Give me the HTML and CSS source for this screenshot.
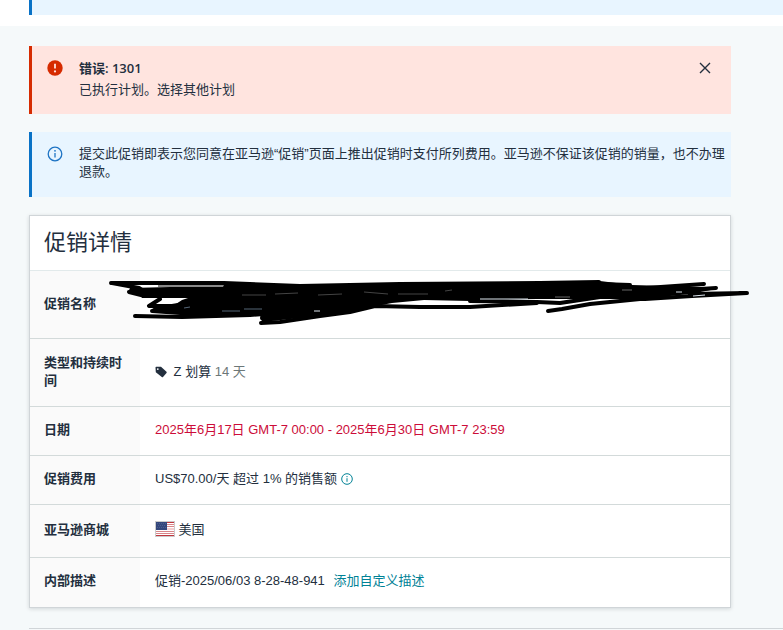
FILE: index.html
```html
<!DOCTYPE html>
<html lang="zh-CN">

<head>
    <meta charset="UTF-8">
    <meta name="viewport" content="width=device-width, initial-scale=1.0">
    <title>促销详情</title>
    <link rel="stylesheet" href="styles.css">
</head>

<body>
    <header class="top">
        <div class="top-notice"></div>
    </header>

    <main>
        <div class="content">
            <div class="alert alert-error" role="alert">
                <svg class="alert-icon" viewBox="0 0 16 16" aria-hidden="true">
                    <circle cx="8" cy="8" r="7.7" fill="#d62b00" />
                    <path d="M8 3.8v4.8" stroke="#ffe3de" stroke-width="1.8" />
                    <circle cx="8" cy="11.4" r="1.1" fill="#ffe3de" />
                </svg>
                <div class="alert-text">
                    <h2>错误: 1301</h2>
                    <p>已执行计划。选择其他计划</p>
                </div>
                <button class="close" type="button" aria-label="关闭">
                    <svg viewBox="0 0 12 12" aria-hidden="true">
                        <path d="M1 1l10 10M11 1L1 11" />
                    </svg>
                </button>
            </div>

            <div class="alert alert-info">
                <svg class="alert-icon" viewBox="0 0 16 16" aria-hidden="true">
                    <circle cx="8" cy="8" r="6.8" fill="none" stroke="#1f74c4" stroke-width="1.3" />
                    <path d="M8 7v4.6" stroke="#1f74c4" stroke-width="1.3" />
                    <circle cx="8" cy="4.8" r="0.9" fill="#1f74c4" />
                </svg>
                <div class="alert-text">
                    <p>提交此促销即表示您同意在亚马逊“促销”页面上推出促销时支付所列费用。亚马逊不保证该促销的销量，也不办理退款。</p>
                </div>
            </div>

            <section class="panel">
                <h1>促销详情</h1>
                <table>
                    <tr class="row-tall">
                        <th scope="row">促销名称</th>
                        <td class="redacted">
                            <svg class="scribble" viewBox="108 276 642 52" aria-hidden="true">
                                <path class="ink" d="M130 288L170 287 223 287 224 283 250 285 320 286 400 284 530 283 600 281 632 285 702 287 716 289 690 294 640 299 600 299 530 299 470 301 424 300 392 303 366 308 350 312 325 316 300 318 262 322 260 315 240 316 184 317 180 315 152 313 152 309 160 304 176 304 182 300 188 298 142 298 140 294 128 293z" />
                                <path class="stroke" d="M111 283L148 283 224 283 300 286 400 284 540 283 599 282" />
                                <path class="stroke" d="M112 283L139 288 142 290 129 292 145 296 220 292 340 290" />
                                <path class="stroke" d="M160 299L149 306 172 306 190 303 M152 311L185 311 270 307" />
                                <path class="stroke" d="M135 316L182 317 250 315 340 308" />
                                <path class="stroke" d="M262 318L277 317 M261 323L280 322 320 316 350 312 375 306 420 307 470 307 537 303" />
                                <path class="stroke" d="M470 301L537 302 560 303 600 297" />
                                <path class="stroke" d="M548 311L562 309 590 304 640 299 M600 284L630 285" />
                                <path class="stroke" d="M632 289L675 286 704 284 M640 293L716 288" />
                                <path class="stroke" d="M632 299L645 299 692 296 747 293 690 294" />
                                <path class="gap" d="M158 286H223" stroke="#888" stroke-width="2" />
                                <path class="gap" d="M242 295H266M275 294L298 293M318 295L342 294M364 292L388 294M398 294H428M445 291L452 290" stroke="#444" />
                                <path class="gap" d="M222 311L240 311M244 309H262M184 308L190 307" stroke="#567" />
                                <path class="gap" d="M314 311H320M480 299H528M693 296L705 295M676 292L682 292" stroke="#dde6ef" />
                                <path class="gap" d="M622 290H632M555 297H570" stroke="#666" />
                            </svg>
                        </td>
                    </tr>
                    <tr class="row-tall">
                        <th scope="row">类型和持续时间</th>
                        <td>
                            <svg class="tag" viewBox="0 0 12 12" aria-hidden="true">
                                <path fill-rule="evenodd" d="M.5 1.5Q.5 .8 1.2.8L6 .8 11.5 5.8Q12 6.3 11.5 6.9L8 11Q7.4 11.5 6.8 11L.8 6.3zM2.8 2.2a.9.9 0 100 1.8.9.9 0 100-1.8z" />
                            </svg>
                            Z 划算 <span class="muted">14 天</span>
                        </td>
                    </tr>
                    <tr>
                        <th scope="row">日期</th>
                        <td class="dates">2025年6月17日 GMT-7 00:00 - 2025年6月30日 GMT-7 23:59</td>
                    </tr>
                    <tr>
                        <th scope="row">促销费用</th>
                        <td>
                            US$70.00/天 超过 1% 的销售额
                            <svg class="info" viewBox="0 0 12 12" aria-hidden="true">
                                <circle cx="6" cy="6" r="5.3" />
                                <path d="M6 5.2v3.6M6 3v1.2" />
                            </svg>
                        </td>
                    </tr>
                    <tr class="row-flag">
                        <th scope="row">亚马逊商城</th>
                        <td>
                            <svg class="flag" viewBox="0 0 20 16" aria-hidden="true">
                                <rect width="20" height="16" fill="#ccc" />
                                <rect x="1" y="1" width="18" height="14" fill="#fff" />
                                <path d="M1 1.5h18M1 14.5h18" stroke="#c1373f" />
                                <path d="M1 3.5h18M1 5.5h18M1 10.5h18M1 12.5h18" stroke="#d9868a" />
                                <path d="M1 8h18" stroke="#f3cfd0" stroke-width="2" />
                                <rect x="1" y="1" width="11" height="8" fill="#34477c" />
                                <path d="M2 2.5h9M3 4.5h8M2 6.5h9" stroke="#4c5d8d" stroke-dasharray="1 1" />
                            </svg>
                            美国
                        </td>
                    </tr>
                    <tr>
                        <th scope="row">内部描述</th>
                        <td>促销-2025/06/03 8-28-48-941 <a href="#">添加自定义描述</a></td>
                    </tr>
                </table>
            </section>
        </div>

        <section class="next-panel"></section>
    </main>
</body>

</html>
```

FILE: styles.css
```css
* {
    box-sizing: border-box;
}

body {
    margin: 0;
    background: #f5f9fa;
    font-family: "Liberation Sans", "Noto Sans CJK SC", sans-serif;
    font-size: 13px;
    line-height: 18px;
    color: #232f3e;
}

h1,
h2,
p {
    margin: 0;
}

.top {
    background: #fff;
    padding: 0 0 11px 29px;
}

.top-notice {
    height: 15px;
    background: #e8f5ff;
    border-left: 3px solid #0972c6;
}

main {
    padding: 20px 0 0 29px;
}

.content {
    margin-right: 52px;
}

.alert {
    display: flex;
    align-items: flex-start;
    gap: 16px;
    margin-bottom: 18px;
    padding: 13px 5px 15px 15px;
    border-left: 3px solid;
}

.alert-error {
    padding-right: 20px;
    background: #ffe4df;
    border-color: #d62b00;
}

.alert-info {
    padding-bottom: 16px;
    background: #e8f5ff;
    border-color: #0972c6;
}

.alert-icon {
    flex: none;
    width: 16px;
    height: 16px;
    margin-top: 1px;
}

.alert-text {
    flex: 1;
}

.alert h2 {
    margin-bottom: 4px;
    font-family: "Open Sans", "Noto Sans CJK SC", sans-serif;
    font-size: 13px;
    font-weight: 600;
    line-height: 18px;
}

.close {
    padding: 3px 0;
    background: none;
    border: none;
    cursor: pointer;
}

.close svg {
    display: block;
    width: 12px;
    height: 12px;
    fill: none;
    stroke: #232f3e;
    stroke-width: 1.4;
}

.panel {
    background: #fff;
    border: 1px solid #d0d5d8;
    box-shadow: 0 1px 4px rgba(0, 20, 30, 0.15);
}

.panel h1 {
    padding: 12px 14px;
    font-size: 22px;
    font-weight: normal;
    line-height: 30px;
}

table {
    width: 100%;
    border-collapse: collapse;
}

tr {
    height: 49px;
    border-top: 1px solid #d3dada;
}

tr:first-child {
    border-top-color: #e2eaeb;
}

.row-tall {
    height: 68px;
}

.row-flag {
    height: 53px;
}

th,
td {
    padding: 13px 15px 15px;
    text-align: left;
    vertical-align: middle;
}

th {
    width: 110px;
    padding-left: 14px;
    background: #fafafa;
    font-weight: bold;
}

.redacted {
    position: relative;
}

/* marker strokes run over both edges of the cell */
.scribble {
    position: absolute;
    top: 5px;
    left: -32px;
    width: 642px;
    height: 52px;
}

.stroke {
    fill: none;
    stroke: #000;
    stroke-width: 4;
    stroke-linecap: round;
    stroke-linejoin: round;
}

.gap {
    fill: none;
}

.tag {
    width: 12px;
    height: 12px;
    margin-right: 3px;
    vertical-align: -2px;
    fill: #232f3e;
}

.muted {
    color: #6c7778;
}

.dates {
    color: #cc0c39;
}

.info {
    width: 12px;
    height: 12px;
    vertical-align: -2px;
    fill: none;
    stroke: #008296;
}

.flag {
    width: 20px;
    height: 16px;
    vertical-align: -3px;
}

a {
    margin-left: 5px;
    color: #008296;
    text-decoration: none;
}

.next-panel {
    margin-top: 20px;
    border-top: 1px solid #d0d5d8;
}
```
